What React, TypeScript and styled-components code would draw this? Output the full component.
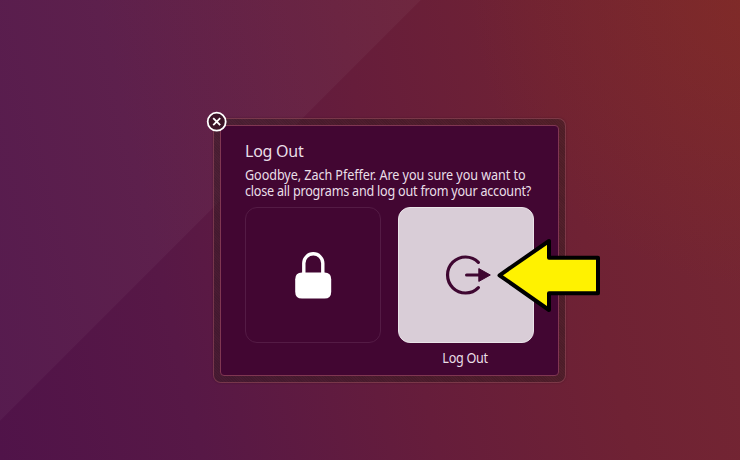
import React from "react";
import styled, { createGlobalStyle } from "styled-components";

const GlobalStyle = createGlobalStyle`
  * { box-sizing: border-box; }
  body { margin: 0; overflow: hidden; }
`;

const Desktop = styled.main`
  position: relative;
  width: 740px;
  height: 460px;
  overflow: hidden;
  padding: 118px 0 0 213px;
  font-family: "Noto Sans", sans-serif;
  color: #e9dfe7;
  background:
    linear-gradient(135deg, rgba(255, 255, 255, 0.035) 297px, transparent 298px),
    radial-gradient(circle at 770px -10px, rgba(144, 48, 24, 0.4), transparent 300px),
    linear-gradient(77deg, #501349 0%, #571846 24%, #661d3b 52%, #6f2234 75%, #762732 100%);
`;

const Frame = styled.section`
  position: relative;
  width: 353px;
  height: 265px;
  padding: 6px;
  border: 1px solid rgba(168, 83, 102, 0.5);
  border-radius: 8px;
  background:
    repeating-linear-gradient(45deg, rgba(0, 0, 0, 0.07) 0 1px, transparent 1px 2px),
    rgba(56, 29, 34, 0.5);
  box-shadow: 0 0 2px rgba(30, 5, 20, 0.35);
`;

const Panel = styled.div`
  height: 251px;
  width: 339px;
  padding: 15px 24px 0;
  border: 1px solid #803652;
  border-radius: 4px;
  background: #420632;
`;

const Title = styled.h1`
  margin: 0;
  height: 26px;
  font-size: 16px;
  font-weight: 400;
  line-height: 21px;
  letter-spacing: -0.25px;
`;

const Line = styled.div<{ $spacing: number }>`
  width: max-content;
  height: 16px;
  font-size: 14px;
  line-height: 16px;
  white-space: nowrap;
  letter-spacing: ${(p) => p.$spacing}px;
  transform: scaleX(0.9);
  transform-origin: left;
`;

const Choices = styled.div`
  display: flex;
  gap: 17px;
  margin-top: 8px;
`;

const Choice = styled.div`
  width: 136px;
  text-align: center;
`;

const ChoiceButton = styled.button<{ $active?: boolean }>`
  display: flex;
  align-items: center;
  justify-content: center;
  width: 136px;
  height: 136px;
  padding: 0;
  border: 1px solid ${(p) => (p.$active ? "#e9e2e8" : "#541b45")};
  border-radius: 12px;
  background: ${(p) => (p.$active ? "#d9cdd7" : "transparent")};
`;

const Label = styled.div`
  margin-top: 5px;
  padding-right: 2px;
  font-size: 14px;
  line-height: 20px;
  letter-spacing: -0.3px;
  transform: scaleX(0.9);
`;

const CloseButton = styled.button`
  position: absolute;
  left: -8px;
  top: -8px;
  width: 21px;
  height: 21px;
  padding: 0;
  border: 0;
  background: none;
`;

const Icon = styled.svg`
  display: block;
  overflow: visible;
`;

const Pointer = styled.svg`
  position: absolute;
  left: 495px;
  top: 236px;
`;

export default function App() {
  return (
    <>
      <GlobalStyle />
      <Desktop>
        <Frame>
          <CloseButton aria-label="Close">
            <Icon width="21" height="21" viewBox="0 0 21 21">
              <circle cx="10.7" cy="10.7" r="9" fill="#3b1427" stroke="#fff" strokeWidth="1.8" />
              <path d="M7.2 7.2l7 7M14.2 7.2l-7 7" stroke="#fff" strokeWidth="1.8" />
            </Icon>
          </CloseButton>
          <Panel>
            <Title>Log Out</Title>
            <Line $spacing={-0.07}>Goodbye, Zach Pfeffer. Are you sure you want to</Line>
            <Line $spacing={-0.25}>close all programs and log out from your account?</Line>
            <Choices>
              <Choice>
                <ChoiceButton aria-label="Lock">
                  <Icon width="38" height="48" viewBox="0 -0.8 38 48">
                    <path d="M9.8 22V11.5a9.5 9.5 0 0 1 19 0V22" fill="none" stroke="#fff" strokeWidth="3.4" />
                    <path d="M8 20.8H30.5Q37.2 20.8 37.2 27.5V40Q37.2 46.8 30.5 46.8H8Q1.2 46.8 1.2 40V27.5Q1.2 20.8 8 20.8Z" fill="#fff" />
                  </Icon>
                </ChoiceButton>
              </Choice>
              <Choice>
                <ChoiceButton $active aria-label="Log Out">
                  <Icon width="50" height="44" viewBox="0 0 50 44">
                    <path d="M37.4 9.4A18 18 0 1 0 37.4 34.6" fill="none" stroke="#3f0731" strokeWidth="3.2" strokeLinecap="round" />
                    <path d="M25.6 22H38" stroke="#3f0731" strokeWidth="3.2" strokeLinecap="round" />
                    <path d="M37.8 15.6L49.3 22L37.8 28.4Z" fill="#3f0731" stroke="#3f0731" strokeLinejoin="round" />
                  </Icon>
                </ChoiceButton>
                <Label>Log Out</Label>
              </Choice>
            </Choices>
          </Panel>
        </Frame>
        <Pointer width="108" height="78" viewBox="0 0 108 78">
          <path d="M4.5 39.3L54 5V21.7H103V57.3H54V74Z" fill="#fff200" stroke="#000" strokeWidth="4" strokeLinejoin="round" />
        </Pointer>
      </Desktop>
    </>
  );
}
